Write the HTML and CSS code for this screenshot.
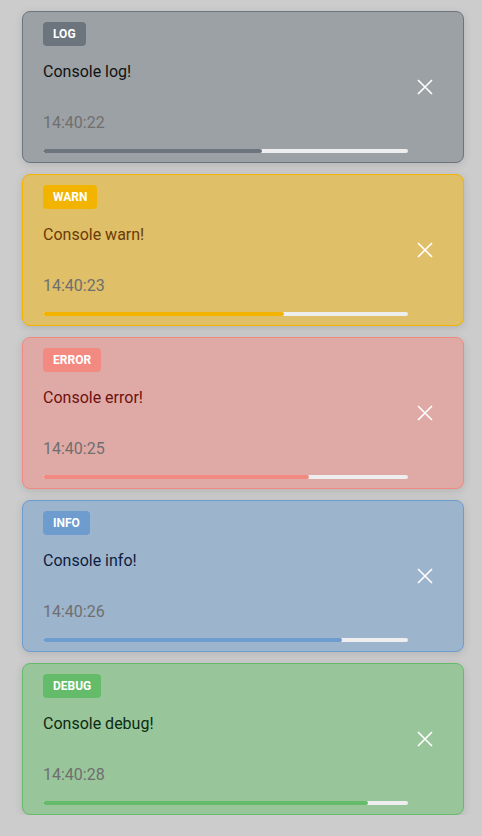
FILE: index.html
```html
<!DOCTYPE html>
<html>
<head>
<meta charset="utf-8">
<link rel="stylesheet" href="styles.css">
</head>
<body>
<div class="stack">
  <div class="toast log">
    <div class="main">
      <span class="badge">LOG</span>
      <div class="msg">Console log!</div>
      <div class="time">14:40:22</div>
      <div class="track"><div class="fill" style="width:60%"></div></div>
    </div>
    <button class="close"><svg viewBox="0 0 16 16" width="16" height="16"><path d="M1 1L15 15M15 1L1 15" stroke="#fff" stroke-width="1.6" fill="none"/></svg></button>
  </div>
  <div class="toast warn">
    <div class="main">
      <span class="badge">WARN</span>
      <div class="msg">Console warn!</div>
      <div class="time">14:40:23</div>
      <div class="track"><div class="fill" style="width:66%"></div></div>
    </div>
    <button class="close"><svg viewBox="0 0 16 16" width="16" height="16"><path d="M1 1L15 15M15 1L1 15" stroke="#fff" stroke-width="1.6" fill="none"/></svg></button>
  </div>
  <div class="toast error">
    <div class="main">
      <span class="badge">ERROR</span>
      <div class="msg">Console error!</div>
      <div class="time">14:40:25</div>
      <div class="track"><div class="fill" style="width:73%"></div></div>
    </div>
    <button class="close"><svg viewBox="0 0 16 16" width="16" height="16"><path d="M1 1L15 15M15 1L1 15" stroke="#fff" stroke-width="1.6" fill="none"/></svg></button>
  </div>
  <div class="toast info">
    <div class="main">
      <span class="badge">INFO</span>
      <div class="msg">Console info!</div>
      <div class="time">14:40:26</div>
      <div class="track"><div class="fill" style="width:82%"></div></div>
    </div>
    <button class="close"><svg viewBox="0 0 16 16" width="16" height="16"><path d="M1 1L15 15M15 1L1 15" stroke="#fff" stroke-width="1.6" fill="none"/></svg></button>
  </div>
  <div class="toast debug">
    <div class="main">
      <span class="badge">DEBUG</span>
      <div class="msg">Console debug!</div>
      <div class="time">14:40:28</div>
      <div class="track"><div class="fill" style="width:89%"></div></div>
    </div>
    <button class="close"><svg viewBox="0 0 16 16" width="16" height="16"><path d="M1 1L15 15M15 1L1 15" stroke="#fff" stroke-width="1.6" fill="none"/></svg></button>
  </div>
</div>
</body>
</html>
```

FILE: styles.css
```css
html, body {
  margin: 0;
  padding: 0;
  background: #cccccc;
  font-family: Roboto, "Liberation Sans", sans-serif;
}
.stack {
  display: flex;
  flex-direction: column;
  gap: 11px;
  padding: 11px 0 0 22px;
}
.toast {
  box-sizing: border-box;
  width: 442px;
  height: 152px;
  border: 1px solid;
  border-radius: 8px;
  display: flex;
  align-items: center;
  box-shadow: 0 2px 8px rgba(0,0,0,0.12);
}
.main {
  flex: 1;
  display: flex;
  flex-direction: column;
  align-items: flex-start;
  padding: 10px 0 9px 20px;
  align-self: stretch;
}
.badge {
  height: 24px;
  line-height: 24px;
  padding: 0 10px;
  border-radius: 4px;
  color: #fff;
  font-weight: 700;
  font-size: 12px;
}
.msg {
  margin-top: 14px;
  font-size: 16px;
  line-height: 24px;
}
.time {
  margin-top: 27px;
  font-size: 16px;
  line-height: 24px;
  color: #6f6f6f;
}
.track {
  margin-top: 14px;
  width: 100%;
  height: 4px;
  border-radius: 2px;
  background: #eeeeee;
  overflow: hidden;
}
.fill {
  height: 100%;
  border-radius: 2px;
}
.close {
  background: none;
  border: 0;
  padding: 0;
  width: 16px;
  height: 16px;
  margin: 0 30px 0 9px;
  display: block;
}
.close svg { display: block; }

.log { background: #9ca1a5; border-color: #6c757d; }
.log .badge, .log .fill { background: #6c757d; }
.log .msg { color: #111111; }

.warn { background: #dfbf67; border-color: #f2b400; }
.warn .badge, .warn .fill { background: #f2b400; }
.warn .msg { color: #6b3a06; }

.error { background: #dfaaa6; border-color: #f28a82; }
.error .badge, .error .fill { background: #f28a82; }
.error .msg { color: #6e1010; }

.info { background: #9db4cd; border-color: #6e9cce; }
.info .badge, .info .fill { background: #6e9cce; }
.info .msg { color: #0f1d3d; }

.debug { background: #98c59a; border-color: #64bc6a; }
.debug .badge, .debug .fill { background: #64bc6a; }
.debug .msg { color: #0c2a10; }
```
